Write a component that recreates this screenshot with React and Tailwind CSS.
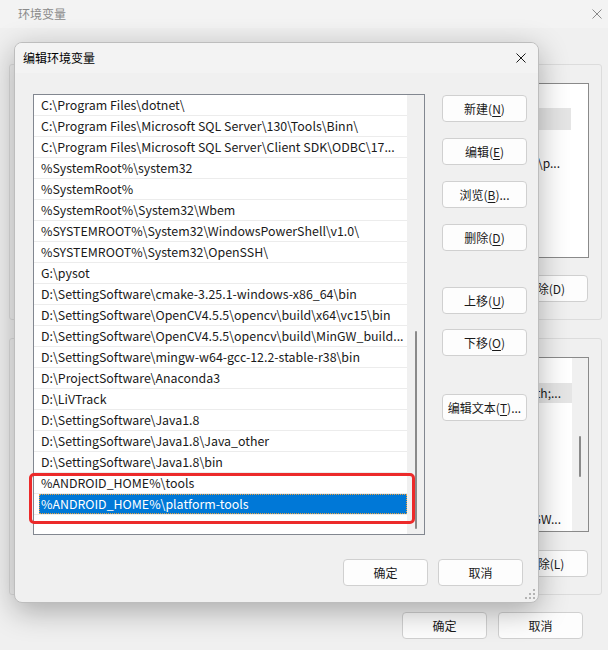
const paths = [
  "C:\\Program Files\\dotnet\\",
  "C:\\Program Files\\Microsoft SQL Server\\130\\Tools\\Binn\\",
  "C:\\Program Files\\Microsoft SQL Server\\Client SDK\\ODBC\\17...",
  "%SystemRoot%\\system32",
  "%SystemRoot%",
  "%SystemRoot%\\System32\\Wbem",
  "%SYSTEMROOT%\\System32\\WindowsPowerShell\\v1.0\\",
  "%SYSTEMROOT%\\System32\\OpenSSH\\",
  "G:\\pysot",
  "D:\\SettingSoftware\\cmake-3.25.1-windows-x86_64\\bin",
  "D:\\SettingSoftware\\OpenCV4.5.5\\opencv\\build\\x64\\vc15\\bin",
  "D:\\SettingSoftware\\OpenCV4.5.5\\opencv\\build\\MinGW_build...",
  "D:\\SettingSoftware\\mingw-w64-gcc-12.2-stable-r38\\bin",
  "D:\\ProjectSoftware\\Anaconda3",
  "D:\\LiVTrack",
  "D:\\SettingSoftware\\Java1.8",
  "D:\\SettingSoftware\\Java1.8\\Java_other",
  "D:\\SettingSoftware\\Java1.8\\bin",
  "%ANDROID_HOME%\\tools",
  "%ANDROID_HOME%\\platform-tools",
];

function CloseIcon({ color = "#1a1a1a" }) {
  return (
    <svg width="10" height="10" viewBox="0 0 10 10">
      <path d="M0.5 0.5 L9.5 9.5 M9.5 0.5 L0.5 9.5" stroke={color} strokeWidth="1" />
    </svg>
  );
}

function Grip() {
  const dots = [
    [8, 0],
    [8, 4],
    [4, 4],
    [8, 8],
    [4, 8],
    [0, 8],
  ];
  return (
    <svg width="10" height="10" viewBox="0 0 10 10">
      {dots.map(([x, y]) => (
        <rect key={`${x}-${y}`} x={x} y={y} width="2" height="2" fill="#b4b4b4" />
      ))}
    </svg>
  );
}

function Btn({ children, className = "" }) {
  return (
    <div
      className={`flex h-[27px] w-[85px] items-center justify-center whitespace-nowrap rounded-[4px] border border-[#d0d0d0] bg-[#fdfdfd] text-[12px] text-[#1a1a1a] ${className}`}
    >
      {children}
    </div>
  );
}

function Key({ children }) {
  return <span className="underline underline-offset-2">{children}</span>;
}

export default function App() {
  return (
    <div className="relative h-[650px] w-[608px] overflow-hidden bg-[#f0f0f0] font-['Noto_Sans_CJK_SC','Noto_Sans',sans-serif]">
      {/* background window */}
      <div className="flex h-[28px] items-center justify-between bg-[#f3f3f3] pl-[18px] pr-[6px] text-[12px] text-[#8a8a8a]">
        <span>环境变量</span>
        <CloseIcon color="#8a8a8a" />
      </div>

      <div className="ml-[9px] mt-[36px] flex h-[256px] w-[593px] flex-col items-end rounded-[3px] border border-[#dcdcdc] pr-[12px] pt-[18px]">
        <div className="h-[175px] w-[567px] border border-[#8a8a8a] bg-white text-[12px] text-[#1a1a1a]">
          <div className="h-[24px]" />
          <div className="mr-[17px] h-[22px] bg-[#e5e5e5]" />
          <div className="mt-[22px] flex h-[22px] items-center justify-end whitespace-nowrap pr-[28px]">D:\SettingSoftware\Tools\p...</div>
        </div>
        <Btn className="mr-[1px] mt-[17px] w-[86px]">删除(D)</Btn>
      </div>

      <div className="ml-[9px] mt-[18px] flex h-[257px] w-[593px] flex-col items-end rounded-[3px] border border-[#dcdcdc] pr-[12px] pt-[18px]">
        <div className="flex h-[175px] w-[567px] border border-[#8a8a8a] bg-white text-[12px] text-[#1a1a1a]">
          <div className="flex-1">
            <div className="h-[25px]" />
            <div className="flex h-[20px] items-center justify-end whitespace-nowrap bg-[#e5e5e5] pr-[11px]">C:\Windows\System32\Wbem;Path;...</div>
            <div className="mt-[106px] flex h-[20px] items-center justify-end whitespace-nowrap pr-[11px]">NUMBER_OF_PROCESSORS;MinGW...</div>
          </div>
          <div className="flex w-[16px] justify-center bg-[#f0f0f0] pt-[78px]">
            <div className="h-[41px] w-[2px] rounded-full bg-[#8a8a8a]" />
          </div>
        </div>
        <Btn className="mr-[1px] mt-[18px] w-[86px]">删除(L)</Btn>
      </div>

      <div className="mt-[17px] flex justify-end gap-[11px] pr-[25px]">
        <Btn className="bg-[#f8f8f8]">确定</Btn>
        <Btn className="bg-[#f8f8f8]">取消</Btn>
      </div>

      {/* edit dialog */}
      <div className="absolute left-[14px] top-[42px] flex h-[561px] w-[525px] flex-col overflow-hidden rounded-[8px] border border-[#bdbdbd] bg-[#f0f0f0] shadow-[0_8px_30px_rgba(0,0,0,0.3)]">
        <div className="flex h-[30px] shrink-0 items-center justify-between bg-[#f3f3f3] pl-[8px] pr-[12px] text-[12px] text-black">
          <span>编辑环境变量</span>
          <CloseIcon />
        </div>

        <div className="flex pl-[18px] pt-[21px]">
          <div className="relative flex h-[441px] w-[392px] border border-[#828790] bg-white text-[12.4px] text-[#1a1a1a]">
            <div className="w-[373px] overflow-hidden">
              {paths.map((p, i) =>
                i === paths.length - 1 ? (
                  <div key={p} className="h-[21px] border-b border-[#ececec]">
                    <div className="ml-[5px] flex h-[20px] items-center whitespace-nowrap bg-[#0078d7] pl-[2px] text-white outline-1 outline-dotted outline-[#e8a040] -outline-offset-1">
                      {p}
                    </div>
                  </div>
                ) : (
                  <div key={p} className="flex h-[21px] items-center whitespace-nowrap border-b border-[#ececec] pl-[7px]">
                    {p}
                  </div>
                )
              )}
            </div>
            <div className="flex w-[17px] justify-center bg-[#f0f0f0] pt-[236px]">
              <div className="h-[198px] w-[2px] rounded-full bg-[#8a8a8a]" />
            </div>
            <div className="absolute left-[-5px] top-[378px] h-[51px] w-[386px] rounded-[5px] border-[3px] border-[#ec2a2a]" />
          </div>

          <div className="ml-[17px] mt-[1px] flex flex-col">
            <Btn className="w-[84px]">
              新建(<Key>N</Key>)
            </Btn>
            <Btn className="mt-[16px] w-[84px]">
              编辑(<Key>E</Key>)
            </Btn>
            <Btn className="mt-[16px] w-[84px]">
              浏览(<Key>B</Key>)...
            </Btn>
            <Btn className="mt-[16px] w-[84px]">
              删除(<Key>D</Key>)
            </Btn>
            <Btn className="mt-[36px] w-[84px]">
              上移(<Key>U</Key>)
            </Btn>
            <Btn className="mt-[15px] w-[84px]">
              下移(<Key>O</Key>)
            </Btn>
            <Btn className="mt-[38px] w-[84px]">
              编辑文本(<Key>T</Key>)...
            </Btn>
          </div>
        </div>

        <div className="relative mt-[24px] flex justify-end gap-[10px] pr-[15px]">
          <Btn>确定</Btn>
          <Btn>取消</Btn>
        </div>
        <div className="absolute bottom-[3px] right-[3px]">
          <Grip />
        </div>
      </div>
    </div>
  );
}
